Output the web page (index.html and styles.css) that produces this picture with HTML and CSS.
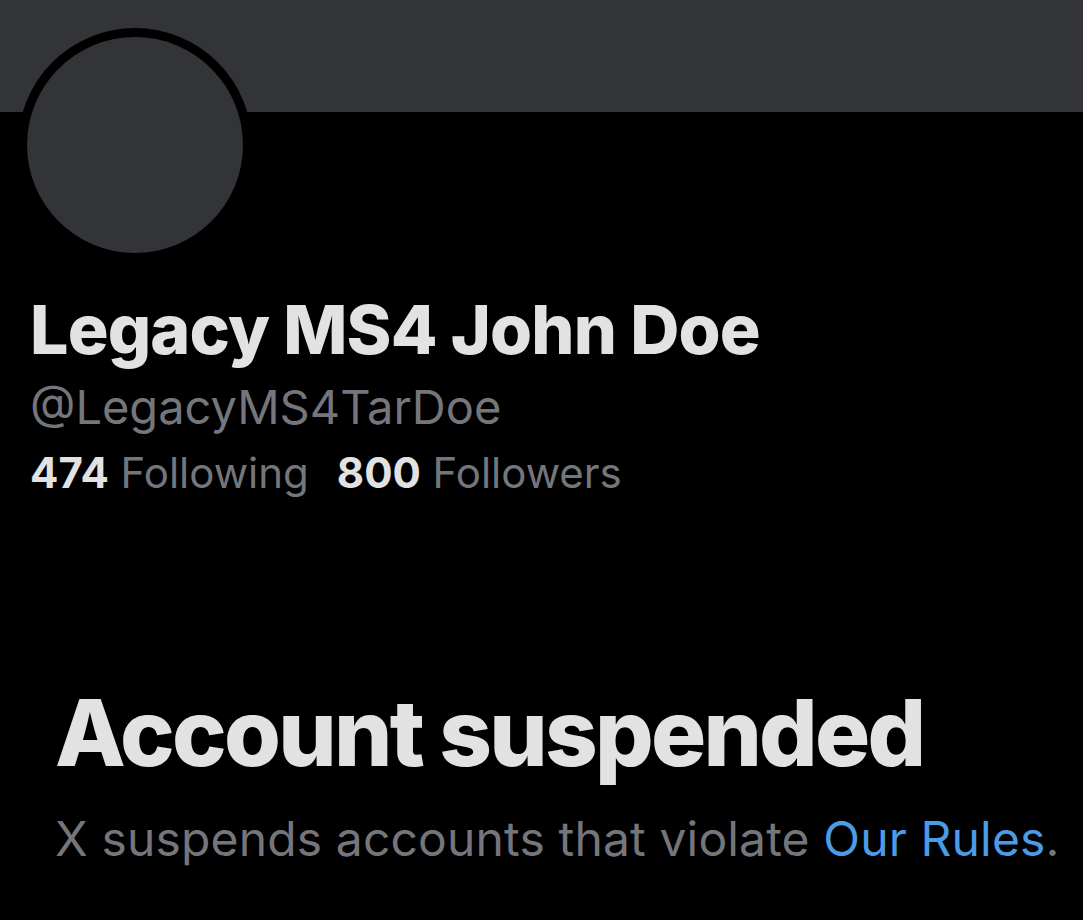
FILE: index.html
```html
<!DOCTYPE html>
<html lang="en">
<head>
<meta charset="utf-8">
<title>Account suspended</title>
<link rel="stylesheet" href="styles.css">
</head>
<body>
<div class="page">
  <div class="banner"></div>
  <div class="profile">
    <div class="avatar"><div class="avatar-inner"></div></div>
    <h1 class="name">Legacy MS4 John Doe</h1>
    <div class="handle">@LegacyMS4TarDoe</div>
    <div class="stats">
      <span class="stat"><b>474</b> Following</span>
      <span class="stat"><b>800</b> Followers</span>
    </div>
  </div>
  <div class="notice">
    <h2 class="notice-title">Account suspended</h2>
    <p class="notice-text">X suspends accounts that violate <a class="rules" href="#">Our Rules</a>.</p>
  </div>
</div>
</body>
</html>
```
FILE: styles.css
```css
html, body {
  margin: 0;
  padding: 0;
  background: #000;
}
.page {
  width: 1083px;
  height: 920px;
  overflow: hidden;
  background: #000;
  font-family: Inter, "Noto Sans", sans-serif;
}
.banner {
  height: 112px;
  background: #333438;
}
.profile {
  padding-left: 30px;
}
.avatar {
  width: 234px;
  height: 234px;
  margin-top: -84px;
  margin-left: -12px;
  border-radius: 50%;
  background: #000;
  display: flex;
  align-items: center;
  justify-content: center;
}
.avatar-inner {
  width: 216px;
  height: 216px;
  border-radius: 50%;
  background: #333438;
}
.name {
  margin: 27px 0 0;
  font-size: 68px;
  font-weight: 800;
  line-height: 80px;
  letter-spacing: -0.012em;
  color: #e2e2e2;
}
.handle {
  margin-top: 11px;
  font-size: 47px;
  line-height: 54px;
  color: #74767b;
}
.stats {
  display: flex;
  gap: 28px;
  margin-top: 11px;
  font-size: 42px;
  line-height: 56px;
  color: #74767b;
}
.stats b {
  color: #e2e2e2;
  font-weight: 700;
}
.notice {
  padding-left: 55px;
  margin-top: 182px;
}
.notice-title {
  margin: 0;
  font-size: 92px;
  font-weight: 800;
  line-height: 100px;
  letter-spacing: -0.03em;
  color: #e2e2e2;
}
.notice-text {
  margin: 28px 0 0;
  font-size: 48px;
  line-height: 56px;
  letter-spacing: 0.003em;
  color: #74767b;
}
.rules {
  color: #4b9be6;
  text-decoration: none;
}
```
